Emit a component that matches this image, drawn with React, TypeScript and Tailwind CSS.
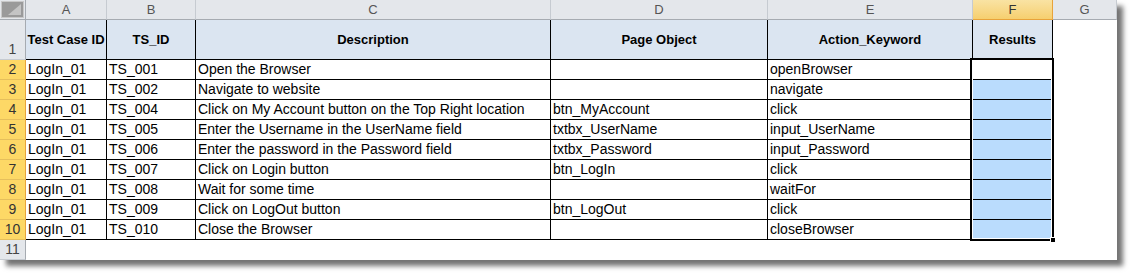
const cols = [
  { key: "A", w: 81 },
  { key: "B", w: 89 },
  { key: "C", w: 355 },
  { key: "D", w: 217 },
  { key: "E", w: 205 },
  { key: "F", w: 80 },
  { key: "G", w: 64 },
];

const headers = ["Test Case ID", "TS_ID", "Description", "Page Object", "Action_Keyword", "Results"];

const rows: string[][] = [
  ["LogIn_01", "TS_001", "Open the Browser", "", "openBrowser"],
  ["LogIn_01", "TS_002", "Navigate to website", "", "navigate"],
  ["LogIn_01", "TS_004", "Click on My Account button on the Top Right location", "btn_MyAccount", "click"],
  ["LogIn_01", "TS_005", "Enter the Username in the UserName field", "txtbx_UserName", "input_UserName"],
  ["LogIn_01", "TS_006", "Enter the password in the Password field", "txtbx_Password", "input_Password"],
  ["LogIn_01", "TS_007", "Click on Login button", "btn_LogIn", "click"],
  ["LogIn_01", "TS_008", "Wait for some time", "", "waitFor"],
  ["LogIn_01", "TS_009", "Click on LogOut button", "btn_LogOut", "click"],
  ["LogIn_01", "TS_010", "Close the Browser", "", "closeBrowser"],
];

const font = { fontFamily: '"Liberation Sans", Arial, sans-serif' };

function Corner() {
  return (
    <div className="w-[26px] h-5 shrink-0 bg-[#e4e7eb] border-r border-b border-[#a6abb1] p-px">
      <svg width="23" height="17" viewBox="0 0 23 17">
        <rect x="0" y="0" width="23" height="17" fill="#9a9a9a" />
        <rect x="0.5" y="0.5" width="22" height="16" fill="none" stroke="#c8c8c8" />
        <polygon points="20,3 20,14 7,14" fill="#c4c4c4" />
      </svg>
    </div>
  );
}

function RowNum({ n, sel, tall }: { n: number; sel: boolean; tall?: boolean }) {
  return (
    <div
      className={
        "w-[26px] shrink-0 flex items-end justify-center border-r border-b text-[14px] leading-[19px] " +
        (tall ? "h-10 " : "h-5 ") +
        (sel
          ? "bg-[#fdd866] border-r-[#e8a33a] border-b-[#e6bf5c] text-[#333]"
          : "bg-[#e4e7eb] border-r-[#a6abb1] border-b-[#c6cbd1] text-[#444]")
      }
    >
      {n}
    </div>
  );
}

export default function App() {
  return (
    <div className="w-[1132px] h-[275px] bg-white" style={font}>
      <div className="relative w-[1117px] h-[260px] bg-white shadow-[6px_6px_5px_rgba(0,0,0,0.55)]">
        {/* column letters */}
        <div className="flex">
          <Corner />
          {cols.map((c) => (
            <div
              key={c.key}
              style={{ width: c.w }}
              className={
                "h-5 shrink-0 flex items-center justify-center border-r border-b text-[13px] " +
                (c.key === "F"
                  ? "bg-gradient-to-b from-[#f9e3a3] to-[#f6cf6e] border-r-[#e8a33a] border-b-[#e8a33a] text-[#333]"
                  : "bg-[#e4e7eb] border-r-[#c6cbd1] border-b-[#a6abb1] text-[#555]")
              }
            >
              {c.key}
            </div>
          ))}
        </div>

        {/* row 1 headers */}
        <div className="flex">
          <RowNum n={1} sel={false} tall />
          {cols.map((c, i) => (
            <div
              key={c.key}
              style={{ width: c.w }}
              className={
                "h-10 shrink-0 flex items-center justify-center text-[13px] font-bold text-black " +
                (i < 6 ? "bg-[#dbe5f1] border-r border-b border-black" : "bg-white")
              }
            >
              {headers[i] ?? ""}
            </div>
          ))}
        </div>

        {/* data rows */}
        {rows.map((r, ri) => (
          <div key={ri} className="flex">
            <RowNum n={ri + 2} sel />
            {cols.map((c, i) => (
              <div
                key={c.key}
                style={{ width: c.w }}
                className={
                  "h-5 shrink-0 flex items-end pl-[2px] text-[14px] leading-[19px] text-black whitespace-nowrap overflow-hidden " +
                  (i < 6 ? "border-r border-b border-black " : "") +
                  (i === 5 && ri > 0 ? "bg-[#badcfd]" : "bg-white")
                }
              >
                {r[i] ?? ""}
              </div>
            ))}
          </div>
        ))}

        {/* row 11 */}
        <div className="flex">
          <RowNum n={11} sel={false} />
          <div className="flex-1 h-5" />
        </div>

        {/* selection F2:F10 */}
        <div className="absolute left-[970px] top-[58px] w-[84px] h-[183px] border-2 border-black pointer-events-none">
          <div className="w-full h-full border border-white">
            <div className="w-full h-[19px] border-b border-black" />
          </div>
          <div className="absolute -right-[4px] -bottom-[4px] w-[6px] h-[6px] bg-black border border-white" />
        </div>
      </div>
    </div>
  );
}
